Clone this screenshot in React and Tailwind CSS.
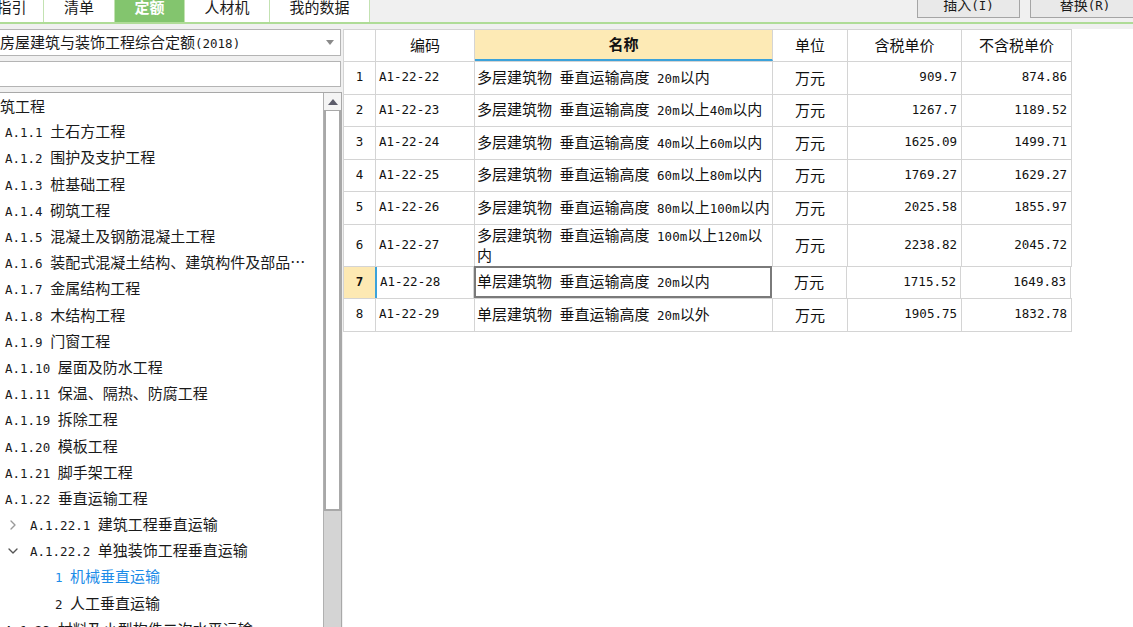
import { ChevronRight, ChevronDown } from "lucide-react";

const CJK = "font-['Noto_Sans_CJK_SC','Noto_Sans',sans-serif]";
const MONO = "font-['DejaVu_Sans_Mono',monospace] text-[12.5px] whitespace-pre";

// split ascii runs into a half-width mono face, like the SimSun look
function Mix({ text }) {
  return text
    .split(/([\x20-\x7e]+)/)
    .filter(Boolean)
    .map((s, i) =>
      /^[\x20-\x7e]+$/.test(s) ? (
        <span key={i} className={MONO}>{s}</span>
      ) : (
        <span key={i}>{s}</span>
      )
    );
}

const tabs = [
  { label: "指引", w: "w-[64px] -ml-[20px]" },
  { label: "清单", w: "w-[71px]" },
  { label: "定额", w: "w-[70px]", active: true },
  { label: "人材机", w: "w-[85px]" },
  { label: "我的数据", w: "w-[100px]" },
];

const tree = [
  { t: "建筑工程", pad: "-ml-[15px]" },
  { t: "A.1.1 土石方工程", pad: "pl-[5px]" },
  { t: "A.1.2 围护及支护工程", pad: "pl-[5px]" },
  { t: "A.1.3 桩基础工程", pad: "pl-[5px]" },
  { t: "A.1.4 砌筑工程", pad: "pl-[5px]" },
  { t: "A.1.5 混凝土及钢筋混凝土工程", pad: "pl-[5px]" },
  { t: "A.1.6 装配式混凝土结构、建筑构件及部品…", pad: "pl-[5px]" },
  { t: "A.1.7 金属结构工程", pad: "pl-[5px]" },
  { t: "A.1.8 木结构工程", pad: "pl-[5px]" },
  { t: "A.1.9 门窗工程", pad: "pl-[5px]" },
  { t: "A.1.10 屋面及防水工程", pad: "pl-[5px]" },
  { t: "A.1.11 保温、隔热、防腐工程", pad: "pl-[5px]" },
  { t: "A.1.19 拆除工程", pad: "pl-[5px]" },
  { t: "A.1.20 模板工程", pad: "pl-[5px]" },
  { t: "A.1.21 脚手架工程", pad: "pl-[5px]" },
  { t: "A.1.22 垂直运输工程", pad: "pl-[5px]" },
  { t: "A.1.22.1 建筑工程垂直运输", pad: "pl-[5px]", chev: "right" },
  { t: "A.1.22.2 单独装饰工程垂直运输", pad: "pl-[5px]", chev: "down" },
  { t: "1 机械垂直运输", pad: "pl-[55px]", blue: true },
  { t: "2 人工垂直运输", pad: "pl-[55px]" },
  { t: "A.1.23 材料及小型构件二次水平运输", pad: "pl-[5px]" },
];

const cols = ["w-[32px]", "w-[99px]", "w-[298px]", "w-[75px]", "w-[114px]", "w-[110px]"];

const rows = [
  ["A1-22-22", ["多层建筑物 垂直运输高度 20m以内"], "909.7", "874.86"],
  ["A1-22-23", ["多层建筑物 垂直运输高度 20m以上40m以内"], "1267.7", "1189.52"],
  ["A1-22-24", ["多层建筑物 垂直运输高度 40m以上60m以内"], "1625.09", "1499.71"],
  ["A1-22-25", ["多层建筑物 垂直运输高度 60m以上80m以内"], "1769.27", "1629.27"],
  ["A1-22-26", ["多层建筑物 垂直运输高度 80m以上100m以内"], "2025.58", "1855.97"],
  ["A1-22-27", ["多层建筑物 垂直运输高度 100m以上120m以", "内"], "2238.82", "2045.72"],
  ["A1-22-28", ["单层建筑物 垂直运输高度 20m以内"], "1715.52", "1649.83"],
  ["A1-22-29", ["单层建筑物 垂直运输高度 20m以外"], "1905.75", "1832.78"],
];

function Toolbar() {
  return (
    <div className="h-[22px] flex items-start bg-[#f0f0f0] overflow-hidden">
      {tabs.map((t) => (
        <div
          key={t.label}
          className={`${t.w} h-[22px] shrink-0 flex justify-center border-r border-[#c3e2b2] ${
            t.active ? "bg-[#83c56e] text-white font-bold" : "bg-white text-[#1a1a1a]"
          }`}
        >
          <span className="-mt-[2px] leading-[18px] text-[15px]">{t.label}</span>
        </div>
      ))}
      <div className="flex-1" />
      <div className="w-[103px] h-[20px] -mt-[2px] shrink-0 border border-[#a5a5a5] bg-[#e9e9e9] flex justify-center">
        <span className="-mt-[4px] leading-[18px] text-[14px] text-[#1a1a1a]">
          <Mix text="插入(I)" />
        </span>
      </div>
      <div className="w-[10px] shrink-0" />
      <div className="w-[110px] h-[20px] -mt-[2px] shrink-0 border border-[#a5a5a5] bg-[#e9e9e9] flex justify-center -mr-[7px]">
        <span className="-mt-[4px] leading-[18px] text-[14px] text-[#1a1a1a]">
          <Mix text="替换(R)" />
        </span>
      </div>
    </div>
  );
}

function LeftPanel() {
  return (
    <div className="w-[343px] shrink-0 flex flex-col pt-[5px] bg-[#f0f0f0]">
      <div className="w-[341px] h-[27px] bg-white border border-l-0 border-[#b4b4b4] flex items-center justify-between pr-[6px]">
        <span className="text-[15px] leading-[18px] whitespace-nowrap text-[#1a1a1a]">
          <Mix text="房屋建筑与装饰工程综合定额(2018)" />
        </span>
        <svg width="8" height="5" viewBox="0 0 8 5">
          <polygon points="0,0 8,0 4,5" fill="#8a8a8a" />
        </svg>
      </div>
      <div className="w-[341px] h-[26px] mt-[5px] bg-white border border-l-0 border-[#b4b4b4]" />
      <div className="w-[342px] flex-1 mt-[5px] bg-white border-t border-r border-[#a8a8a8] flex overflow-hidden">
        <div className="flex-1 overflow-hidden">
          {tree.map((n) => (
            <div
              key={n.t}
              className={`h-[26.2px] flex items-center whitespace-nowrap text-[15px] ${n.pad} ${
                n.blue ? "text-[#1d8ce8]" : "text-[#1a1a1a]"
              }`}
            >
              {n.chev === "right" && (
                <ChevronRight size={16} strokeWidth={2} className="text-[#9a9a9a] mr-[9px] shrink-0" />
              )}
              {n.chev === "down" && (
                <ChevronDown size={16} strokeWidth={2} className="text-[#555] mr-[9px] shrink-0" />
              )}
              <span className="leading-[18px]">
                <Mix text={n.t} />
              </span>
            </div>
          ))}
        </div>
        <div className="w-[18px] shrink-0 flex flex-col bg-[#d4d4d4] border-l border-[#b0b0b0]">
          <div className="h-[18px] bg-[#f4f4f4] border-b border-[#a8a8a8] flex items-center justify-center">
            <svg width="10" height="6" viewBox="0 0 10 6">
              <polygon points="0,6 10,6 5,0" fill="#5c5c6a" />
            </svg>
          </div>
          <div className="h-[400px] bg-white border-2 border-t-0 border-[#a8a8a8]" />
        </div>
      </div>
    </div>
  );
}

function Table() {
  return (
    <div className="flex-1 bg-white">
      <div className="h-[5px] bg-[#f0f0f0]" />
      <div className="w-[729px] border-l border-t border-[#d4d4d4] text-[15px] text-[#111]">
        <div className="flex h-[32px] border-b border-[#d4d4d4]">
          {["", "编码", "名称", "单位", "含税单价", "不含税单价"].map((h, i) => (
            <div
              key={i}
              className={`${cols[i]} shrink-0 flex items-center justify-center border-r border-[#d4d4d4] ${
                i === 2 ? "bg-[#fdeab5] font-bold border-b-2 border-b-[#3ba2da]" : ""
              }`}
            >
              {h}
            </div>
          ))}
        </div>
        {rows.map((r, idx) => {
          const sel = idx === 6;
          return (
            <div
              key={r[0]}
              className={`flex border-b border-[#d4d4d4] ${idx === 5 ? "h-[42px]" : "h-[32.5px]"}`}
            >
              <div
                className={`${cols[0]} shrink-0 flex items-center justify-center border-r border-[#d4d4d4] ${MONO} ${
                  sel ? "bg-[#fde9b3] font-bold" : ""
                }`}
              >
                {idx + 1}
              </div>
              <div
                className={`${cols[1]} shrink-0 flex items-center pl-[3px] border-r border-[#d4d4d4] ${MONO} ${
                  sel ? "border-l-2 border-l-[#3ba2da] -ml-[1px]" : ""
                }`}
              >
                {r[0]}
              </div>
              <div
                className={`${cols[2]} shrink-0 flex items-center whitespace-nowrap ${
                  sel
                    ? "border-2 border-[#7a7a7a] -mt-[1px] h-[calc(100%+1px)] pl-[1px]"
                    : "border-r border-[#d4d4d4] pl-[2px]"
                }`}
              >
                <div className="leading-[18px]">
                  {r[1].map((l) => (
                    <div key={l}>
                      <Mix text={l} />
                    </div>
                  ))}
                </div>
              </div>
              <div className={`${cols[3]} shrink-0 flex items-center justify-center border-r border-[#d4d4d4]`}>
                万元
              </div>
              <div className={`${cols[4]} shrink-0 flex items-center justify-end pr-[4px] border-r border-[#d4d4d4] ${MONO}`}>
                {r[2]}
              </div>
              <div className={`${cols[5]} shrink-0 flex items-center justify-end pr-[4px] border-r border-[#d4d4d4] ${MONO}`}>
                {r[3]}
              </div>
            </div>
          );
        })}
      </div>
    </div>
  );
}

export default function App() {
  return (
    <div className={`w-[1133px] h-[627px] overflow-hidden bg-white flex flex-col ${CJK}`}>
      <Toolbar />
      <div className="h-[2px] bg-[#afdc97]" />
      <div className="flex-1 flex min-h-0">
        <LeftPanel />
        <Table />
      </div>
    </div>
  );
}
